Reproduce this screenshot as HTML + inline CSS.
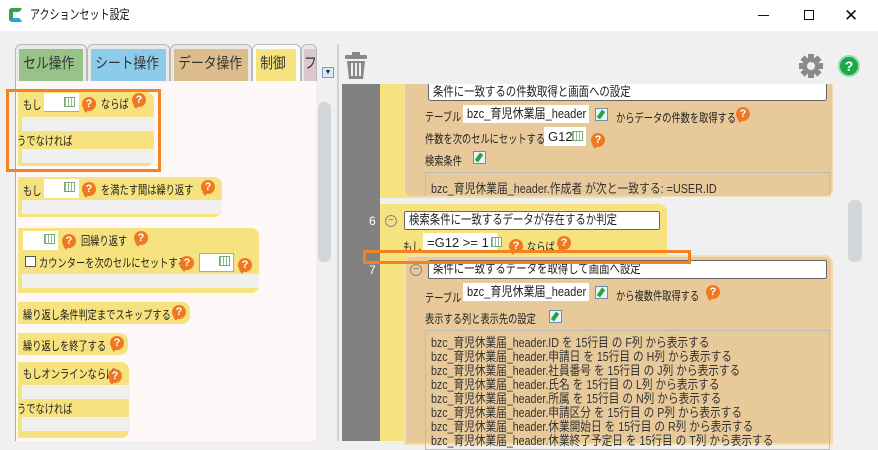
<!DOCTYPE html>
<html><head><meta charset="utf-8"><style>
*{margin:0;padding:0;box-sizing:border-box}
body{width:878px;height:441px;overflow:hidden;background:#f0f0f0;font-family:"Liberation Sans","Noto Sans CJK JP",sans-serif;font-size:12px;color:#222;position:relative}
.a{position:absolute}
.t{position:absolute;white-space:nowrap;line-height:14px;transform:scaleX(.77);transform-origin:0 0}
.s{display:inline-block;transform:scaleX(.8);transform-origin:0 0;white-space:nowrap}
.q{position:absolute;width:14px;height:14px;border-radius:50%;background:#f07820;color:#fff;font-weight:bold;font-size:11px;line-height:14px;text-align:center}
.q:after{content:"";position:absolute;left:1px;bottom:-2px;border-left:3px solid transparent;border-right:3px solid transparent;border-top:4px solid #f07820}
.g{position:absolute;width:11px;height:10px;background:repeating-linear-gradient(90deg,#8bbf8b 0 1px,#fff 1px 3px),#cfe7cf;border:1px solid #7aa97a}
.e{position:absolute;width:13px;height:13px;border:1px solid #6b8fb0;background:#eaf3fb}
.e:after{content:"";position:absolute;left:3px;top:1px;width:4px;height:9px;background:#27a33a;transform:rotate(35deg)}
.in{position:absolute;background:#fff;line-height:16px;padding-left:4px;white-space:nowrap;font-size:13px;overflow:hidden}
.y{position:absolute;background:#f6e27e;border-radius:0 8px 8px 0}
.gs{position:absolute;background:#f0f0f0}
.tab{position:absolute;top:44px;height:37px;border:1px solid #b9b9b9;border-bottom:none;border-radius:6px 6px 0 0;background:#e9e9e9;overflow:hidden}
.tab span{position:absolute;left:3px;right:3px;top:4px;bottom:0;font-size:15px;line-height:30px;color:#333;white-space:nowrap}
.tab span i{font-style:normal;display:inline-block;transform:scaleX(.85);transform-origin:0 0;padding-left:5px}
.mono{font-size:13px}
</style></head><body>
<!-- title bar -->
<div class="a" style="left:0;top:0;width:878px;height:31px;background:#fff"></div>
<div class="a" style="left:9px;top:8px;width:14px;height:14px;border-radius:3px;border:4px solid #3aa14a;border-right-color:transparent;border-bottom-color:#2b9fe0"></div>
<div class="t" style="left:30px;top:8px;font-size:13px;color:#111">アクションセット設定</div>
<div class="a" style="left:758px;top:15px;width:11px;height:1px;background:#111"></div>
<div class="a" style="left:804px;top:10px;width:10px;height:10px;border:1px solid #111"></div>
<div class="a" style="left:844px;top:6px;font-size:17px;color:#111">✕</div>

<!-- left panel -->
<div class="a" style="left:15px;top:80px;width:301px;height:361px;background:#fdf8f7;border-left:1px solid #aaa"></div>
<div class="tab" style="left:15px;width:72px"><span style="background:#98c28a"><i>セル操作</i></span></div>
<div class="tab" style="left:87px;width:83px"><span style="background:#8ccbea"><i>シート操作</i></span></div>
<div class="tab" style="left:170px;width:82px"><span style="background:#dcbb8d"><i>データ操作</i></span></div>
<div class="tab" style="left:252px;width:49px;background:#fafafa"><span style="background:#f6e27e;right:4px"><i>制御</i></span></div>
<div class="tab" style="left:301px;width:16px"><span style="background:#dcc7cf;left:2px;right:0"><i style="padding-left:0">フ</i></span></div>
<div class="a" style="left:322px;top:67px;width:12px;height:11px;border:1px solid #7a9cc4;background:#dbe8f7;font-size:7px;line-height:9px;text-align:center">▼</div>
<div class="a" style="left:317px;top:84px;width:15px;height:357px;background:#f0f0f0"></div>
<div class="a" style="left:318px;top:102px;width:13px;height:160px;background:#d3d6da;border-radius:6px"></div>

<!-- block 1 -->
<div class="y" style="left:18px;top:92px;width:136px;height:74px"></div>
<div class="gs" style="left:22px;top:117px;width:132px;height:14px"></div>
<div class="gs" style="left:22px;top:149px;width:132px;height:14px"></div>
<div class="t" style="left:23px;top:98px">もし</div>
<div class="a" style="left:44px;top:93px;width:35px;height:19px;background:#fff;border-bottom:1px solid #aaa"></div>
<div class="g" style="left:64px;top:97px"></div>
<div class="q" style="left:82px;top:97px">?</div>
<div class="t" style="left:101px;top:97px">ならば</div>
<div class="q" style="left:132px;top:93px">?</div>
<div class="t" style="left:17px;top:134px">うでなければ</div>
<div class="a" style="left:6px;top:89px;width:155px;height:83px;border:3px solid #f58220"></div>

<!-- block 2 -->
<div class="y" style="left:18px;top:177px;width:204px;height:40px"></div>
<div class="gs" style="left:22px;top:200px;width:200px;height:14px"></div>
<div class="t" style="left:23px;top:184px">もし</div>
<div class="a" style="left:44px;top:179px;width:35px;height:19px;background:#fff"></div>
<div class="g" style="left:64px;top:182px"></div>
<div class="q" style="left:82px;top:182px">?</div>
<div class="t" style="left:101px;top:183px">を満たす間は繰り返す</div>
<div class="q" style="left:201px;top:180px">?</div>

<!-- block 3 -->
<div class="y" style="left:18px;top:228px;width:241px;height:65px"></div>
<div class="gs" style="left:22px;top:274px;width:237px;height:14px"></div>
<div class="a" style="left:23px;top:231px;width:35px;height:19px;background:#fff"></div>
<div class="g" style="left:44px;top:234px"></div>
<div class="q" style="left:62px;top:234px">?</div>
<div class="t" style="left:81px;top:234px">回繰り返す</div>
<div class="q" style="left:134px;top:231px">?</div>
<div class="a" style="left:25px;top:256px;width:11px;height:11px;border:1px solid #555;background:#fff"></div>
<div class="t" style="left:39px;top:256px">カウンターを次のセルにセットする</div>
<div class="q" style="left:180px;top:256px">?</div>
<div class="a" style="left:199px;top:253px;width:35px;height:19px;background:#fff;border:1px solid #aaa"></div>
<div class="g" style="left:219px;top:256px"></div>
<div class="q" style="left:238px;top:258px">?</div>

<div class="y" style="left:18px;top:302px;width:172px;height:22px"></div>
<div class="t" style="left:23px;top:308px">繰り返し条件判定までスキップする</div>
<div class="q" style="left:172px;top:305px">?</div>
<div class="y" style="left:18px;top:333px;width:110px;height:22px"></div>
<div class="t" style="left:23px;top:339px">繰り返しを終了する</div>
<div class="q" style="left:110px;top:336px">?</div>
<div class="y" style="left:18px;top:362px;width:111px;height:76px"></div>
<div class="gs" style="left:22px;top:385px;width:108px;height:14px"></div>
<div class="gs" style="left:22px;top:417px;width:108px;height:14px"></div>
<div class="t" style="left:23px;top:367px">もしオンラインならば</div>
<div class="q" style="left:108px;top:369px">?</div>
<div class="t" style="left:17px;top:402px">うでなければ</div>

<!-- splitter -->
<div class="a" style="left:337px;top:44px;width:2px;height:397px;background:#d0d0d0"></div>

<!-- right toolbar -->
<svg class="a" style="left:345px;top:52px" width="22" height="27" viewBox="0 0 22 27"><rect x="7" y="0" width="8" height="3" fill="#888"/><rect x="0" y="3" width="22" height="4" rx="1" fill="#888"/><path d="M2 9h18l-2 18H4z" fill="#888"/><rect x="6" y="11" width="2" height="13" fill="#f0f0f0"/><rect x="10" y="11" width="2" height="13" fill="#f0f0f0"/><rect x="14" y="11" width="2" height="13" fill="#f0f0f0"/></svg>
<svg class="a" style="left:799px;top:54px" width="24" height="24" viewBox="0 0 24 24"><g fill="#8a8a8a"><circle cx="12" cy="12" r="8"/><rect x="9" y="0" width="6" height="24"/><rect x="9" y="0" width="6" height="24" transform="rotate(45 12 12)"/><rect x="9" y="0" width="6" height="24" transform="rotate(90 12 12)"/><rect x="9" y="0" width="6" height="24" transform="rotate(135 12 12)"/></g><circle cx="12" cy="12" r="4" fill="#f0f0f0"/></svg>
<div class="a" style="left:838px;top:55px;width:22px;height:22px;border-radius:50%;background:#1aa84a;border:2px solid #8fe0a8;color:#fff;font-weight:bold;font-size:14px;line-height:18px;text-align:center">?</div>

<!-- right canvas -->
<div class="a" style="left:340px;top:84px;width:538px;height:357px;background:#f0f0f0"></div>
<div class="a" style="left:342px;top:84px;width:38px;height:357px;background:#808080"></div>
<div class="a" style="left:380px;top:84px;width:287px;height:114px;background:#f6e27e;border-radius:0 0 8px 0"></div>
<div class="a" style="left:380px;top:204px;width:287px;height:237px;background:#f6e27e;border-radius:0 8px 0 0"></div>
<div class="a" style="left:848px;top:200px;width:14px;height:62px;background:#d3d6da;border-radius:6px"></div>

<!-- tan block 5 -->
<div class="a" style="left:404px;top:84px;width:429px;height:113px;background:#e8c99a;border:1px solid #f3dfb0;border-top:none;border-radius:0 0 8px 8px"></div>
<div class="in" style="left:428px;top:84px;width:399px;height:17px;border:1px solid #666;border-top:none;border-radius:0 0 3px 3px;line-height:15px"><span class="s">条件に一致するの件数取得と画面への設定</span></div>
<div class="t" style="left:425px;top:110px">テーブル</div>
<div class="in" style="left:463px;top:105px;width:126px;height:18px;line-height:18px"><span class="s" style="transform:scaleX(.85)">bzc_育児休業届_header</span></div>
<div class="e" style="left:595px;top:108px"></div>
<div class="t" style="left:616px;top:111px">からデータの件数を取得する</div>
<div class="q" style="left:736px;top:107px">?</div>
<div class="t" style="left:425px;top:132px">件数を次のセルにセットする</div>
<div class="in" style="left:544px;top:127px;width:42px;height:19px;line-height:19px">G12</div>
<div class="g" style="left:572px;top:131px"></div>
<div class="q" style="left:591px;top:133px">?</div>
<div class="t" style="left:425px;top:154px">検索条件</div>
<div class="e" style="left:473px;top:151px"></div>
<div class="a mono" style="left:425px;top:172px;width:405px;height:24px;border:1px solid #bbb;border-bottom:none;padding:5px 0 0 5px;color:#333;white-space:nowrap"><span class="s" style="transform:scaleX(.83)">bzc_育児休業届_header.作成者 が次と一致する: =USER.ID</span></div>

<!-- block 6 -->
<div class="a" style="left:369px;top:214px;color:#fff;font-size:12px">6</div>
<div class="a" style="left:385px;top:215px;width:12px;height:12px;border:1px solid #888;border-radius:50%;font-size:10px;line-height:9px;text-align:center;color:#666">−</div>
<div class="in" style="left:404px;top:211px;width:256px;height:19px;border:1px solid #666;border-radius:2px"><span class="s">検索条件に一致するデータが存在するか判定</span></div>
<div class="t" style="left:403px;top:240px">もし</div>
<div class="in" style="left:423px;top:233px;width:74px;height:19px;line-height:19px">=G12 &gt;= 1</div>
<div class="g" style="left:491px;top:237px"></div>
<div class="q" style="left:509px;top:239px">?</div>
<div class="t" style="left:527px;top:240px">ならば</div>
<div class="q" style="left:557px;top:236px">?</div>

<!-- block 7 -->
<div class="a" style="left:404px;top:255px;width:429px;height:190px;background:#e8c99a;border:2px solid #f3dfb0;border-radius:8px 8px 0 0"></div>
<div class="a" style="left:369px;top:263px;color:#fff;font-size:12px">7</div>
<div class="a" style="left:410px;top:264px;width:12px;height:12px;border:1px solid #888;border-radius:50%;font-size:10px;line-height:9px;text-align:center;color:#666">−</div>
<div class="in" style="left:428px;top:260px;width:399px;height:19px;border:1px solid #666;border-radius:2px"><span class="s">条件に一致するデータを取得して画面へ設定</span></div>
<div class="t" style="left:425px;top:291px">テーブル</div>
<div class="in" style="left:463px;top:283px;width:126px;height:18px;line-height:18px"><span class="s" style="transform:scaleX(.85)">bzc_育児休業届_header</span></div>
<div class="e" style="left:595px;top:286px"></div>
<div class="t" style="left:616px;top:289px">から複数件取得する</div>
<div class="q" style="left:706px;top:285px">?</div>
<div class="t" style="left:425px;top:312px">表示する列と表示先の設定</div>
<div class="e" style="left:549px;top:310px"></div>
<div class="a mono" style="left:425px;top:330px;width:405px;height:120px;border:1px solid #bbb;padding:5px 0 0 5px;color:#333;line-height:14px;white-space:nowrap;overflow:hidden"><div class="s" style="transform:scaleX(.82)">
bzc_育児休業届_header.ID を 15行目 の F列 から表示する<br>
bzc_育児休業届_header.申請日 を 15行目 の H列 から表示する<br>
bzc_育児休業届_header.社員番号 を 15行目 の J列 から表示する<br>
bzc_育児休業届_header.氏名 を 15行目 の L列 から表示する<br>
bzc_育児休業届_header.所属 を 15行目 の N列 から表示する<br>
bzc_育児休業届_header.申請区分 を 15行目 の P列 から表示する<br>
bzc_育児休業届_header.休業開始日 を 15行目 の R列 から表示する<br>
bzc_育児休業届_header.休業終了予定日 を 15行目 の T列 から表示する</div></div>

<div class="a" style="left:363px;top:250px;width:328px;height:14px;border:3px solid #f58220"></div>
</body></html>
